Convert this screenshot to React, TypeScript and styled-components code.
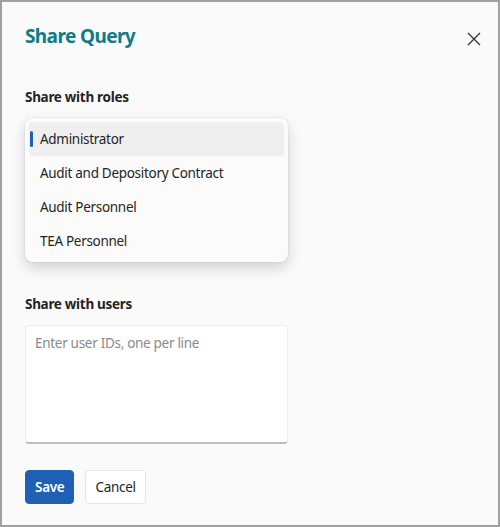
import { useState } from 'react';
import styled, { createGlobalStyle } from 'styled-components';

const GlobalStyle = createGlobalStyle`
    html, body {
        margin: 0;
        padding: 0;
        background: #fafafa;
    }
    body {
        font-family: 'Noto Sans', 'Open Sans', Arial, sans-serif;
        color: #242424;
        letter-spacing: -0.3px;
    }
`;

const Dialog = styled.div`
    box-sizing: border-box;
    width: 500px;
    height: 527px;
    border: 2px solid #a0a0a0;
    background: #fafafa;
    padding: 20px 23px 0 23px;
    display: flex;
    flex-direction: column;
`;

const Header = styled.div`
    display: flex;
    justify-content: space-between;
    align-items: flex-start;
`;

const Title = styled.h2`
    margin: 0;
    color: #0e7c88;
    font-size: 19px;
    font-weight: 700;
    line-height: 28px;
    letter-spacing: -0.6px;
`;

const CloseButton = styled.button`
    border: none;
    background: none;
    padding: 0;
    margin: 8px -8px 0 0;
    width: 18px;
    height: 18px;
    display: flex;
    align-items: center;
    justify-content: center;
    cursor: pointer;
`;

const Label = styled.div`
    font-size: 13.5px;
    font-weight: 700;
    line-height: 20px;
    color: #242424;
`;

const RolesLabel = styled(Label)`
    margin-top: 37px;
`;

const UsersLabel = styled(Label)`
    margin-top: 32px;
`;

const RoleList = styled.ul`
    list-style: none;
    margin: 11px 0 0 0;
    padding: 4px;
    width: 263px;
    box-sizing: border-box;
    background: #fbfbfb;
    border-radius: 8px;
    box-shadow: 0 0 2px rgba(0, 0, 0, 0.14), 0 6px 14px rgba(0, 0, 0, 0.16);
`;

const RoleItem = styled.li<{ $active: boolean }>`
    position: relative;
    height: 34px;
    display: flex;
    align-items: center;
    padding-left: 11px;
    border-radius: 4px;
    font-size: 13.5px;
    color: #242424;
    background: ${(p) => (p.$active ? '#efefef' : 'transparent')};
    cursor: pointer;

    &::before {
        content: '';
        display: ${(p) => (p.$active ? 'block' : 'none')};
        position: absolute;
        left: 1px;
        top: 9px;
        width: 3px;
        height: 16px;
        border-radius: 2px;
        background: #1f5fb5;
    }
`;

const UserInput = styled.textarea`
    margin-top: 11px;
    width: 263px;
    height: 119px;
    box-sizing: border-box;
    resize: none;
    border: 1px solid #ececec;
    border-bottom: 2px solid #bdbdbd;
    border-radius: 4px;
    background: #ffffff;
    padding: 7px 9px;
    font-family: inherit;
    font-size: 13.5px;
    letter-spacing: -0.3px;
    line-height: 20px;
    color: #242424;
    outline: none;

    &::placeholder {
        color: #8a8a8a;
    }
`;

const Actions = styled.div`
    display: flex;
    gap: 11px;
    margin-top: 26px;
`;

const Button = styled.button<{ $primary?: boolean }>`
    height: 34px;
    padding: 0 9px;
    border-radius: 4px;
    font-family: inherit;
    font-size: 13.5px;
    letter-spacing: -0.3px;
    cursor: pointer;
    border: 1px solid ${(p) => (p.$primary ? '#1f60b5' : '#e6e6e6')};
    background: ${(p) => (p.$primary ? '#1f60b5' : '#ffffff')};
    color: ${(p) => (p.$primary ? '#ffffff' : '#242424')};
    font-weight: ${(p) => (p.$primary ? 600 : 400)};
`;

const roles = [
    'Administrator',
    'Audit and Depository Contract',
    'Audit Personnel',
    'TEA Personnel',
];

const App = () => {
    const [active, setActive] = useState('Administrator');

    return (
        <>
            <GlobalStyle />
            <Dialog>
                <Header>
                    <Title>Share Query</Title>
                    <CloseButton aria-label="Close">
                        <svg width="14" height="14" viewBox="0 0 14 14">
                            <path
                                d="M1 1 L13 13 M13 1 L1 13"
                                stroke="#333"
                                strokeWidth="1.3"
                                fill="none"
                            />
                        </svg>
                    </CloseButton>
                </Header>
                <RolesLabel>Share with roles</RolesLabel>
                <RoleList>
                    {roles.map((role) => (
                        <RoleItem
                            key={role}
                            $active={role === active}
                            onClick={() => setActive(role)}
                        >
                            {role}
                        </RoleItem>
                    ))}
                </RoleList>
                <UsersLabel>Share with users</UsersLabel>
                <UserInput placeholder="Enter user IDs, one per line" />
                <Actions>
                    <Button $primary>Save</Button>
                    <Button>Cancel</Button>
                </Actions>
            </Dialog>
        </>
    );
};
export default App;
